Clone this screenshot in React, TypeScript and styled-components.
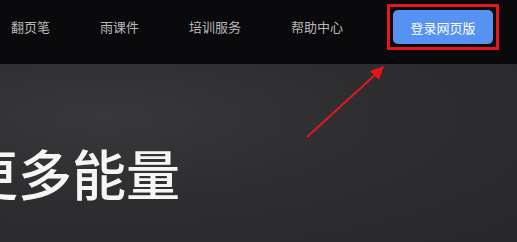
import React from "react";
import styled, { createGlobalStyle } from "styled-components";

const Global = createGlobalStyle`
  html, body { margin: 0; padding: 0; background: #2b2b2e; }
  body { font-family: "Noto Sans CJK SC", "Noto Sans", sans-serif; }
`;

const Page = styled.div`
  position: relative;
  width: 517px;
  height: 242px;
  overflow: hidden;
  display: flex;
  flex-direction: column;
`;

const Nav = styled.nav`
  height: 64px;
  box-sizing: border-box;
  padding: 10px 0 0 11px;
  background: #0a0a0c;
  display: flex;
  align-items: flex-start;
  gap: 50px;
`;

const NavItem = styled.a`
  height: 34px;
  line-height: 34px;
  font-size: 13px;
  color: #b9b9b9;
  white-space: nowrap;
  text-decoration: none;
`;

const ButtonWrap = styled.div`
  position: relative;
`;

const LoginButton = styled.button`
  width: 100px;
  height: 34px;
  border: none;
  border-radius: 5px;
  background: #5592f1;
  color: #ffffff;
  font-family: "Noto Sans CJK SC", sans-serif;
  font-size: 13px;
  padding: 0;
`;

const Highlight = styled.div`
  position: absolute;
  left: -6px;
  top: -6px;
  width: 112px;
  height: 46px;
  box-sizing: border-box;
  border: 3px solid #e8151b;
`;

const Hero = styled.section`
  flex: 1;
  background: radial-gradient(ellipse at 20% 30%, #38383b 0%, #2e2e31 45%, #28282b 100%);
  padding-top: 79px;
  overflow: hidden;
`;

const Title = styled.h1`
  margin: 0 0 0 -36px;
  font-size: 54px;
  line-height: 60px;
  font-weight: 500;
  color: #f5f5f5;
  white-space: nowrap;
  letter-spacing: 0;
`;

const Arrow = styled.svg`
  position: absolute;
  left: 300px;
  top: 60px;
`;

export default function App() {
  return (
    <Page>
      <Global />
      <Nav>
        <NavItem>翻页笔</NavItem>
        <NavItem>雨课件</NavItem>
        <NavItem>培训服务</NavItem>
        <NavItem>帮助中心</NavItem>
        <ButtonWrap>
          <LoginButton>登录网页版</LoginButton>
          <Highlight />
        </ButtonWrap>
      </Nav>
      <Hero>
        <Title>更多能量</Title>
      </Hero>
      <Arrow width="90" height="85" viewBox="0 0 90 85">
        <line x1="7" y1="77" x2="76" y2="14" stroke="#e3161c" strokeWidth="2" />
        <polygon points="84,6 70,11 79,20" fill="#e3161c" />
      </Arrow>
    </Page>
  );
}
